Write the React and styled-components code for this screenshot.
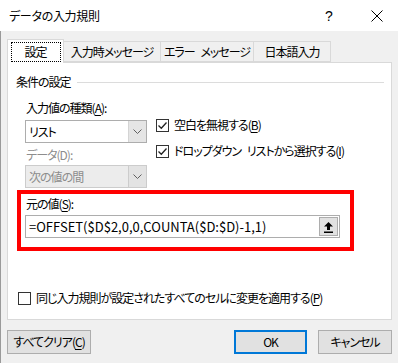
import React from 'react'
import styled, { createGlobalStyle } from 'styled-components'

const Global = createGlobalStyle`
  html, body {
    margin: 0;
    padding: 0;
    background: #f0f0f0;
  }
  body {
    font-family: "Noto Sans CJK JP", "Noto Sans", sans-serif;
    font-size: 12px;
    font-feature-settings: "palt";
    letter-spacing: -1px;
    color: #000;
  }
`

const Window = styled.div`
  width: 398px;
  height: 363px;
  display: flex;
  flex-direction: column;
  overflow: hidden;
`

const TitleBar = styled.div`
  height: 31px;
  flex: none;
  background: #fff;
  display: flex;
  align-items: center;
  padding-left: 9px;
`

const Title = styled.div`
  flex: 1;
  font-size: 12px;
  line-height: 16px;
  letter-spacing: -0.3px;
`

const Help = styled.div`
  width: 14px;
  font-size: 14px;
  font-family: "Liberation Sans", sans-serif;
  letter-spacing: 0;
  margin-right: 35px;
  text-align: center;
`

const Close = styled.div`
  width: 12px;
  height: 12px;
  margin-right: 15px;
  display: flex;
`

const Body = styled.div`
  flex: 1;
  border-left: 1px solid #9a9a9a;
  padding: 8px 6px 0 6px;
  display: flex;
  flex-direction: column;
`

const TabRow = styled.div`
  display: flex;
  align-items: flex-end;
  height: 23px;
  position: relative;
  z-index: 1;
`

const Tab = styled.div`
  width: ${p => p.w}px;
  height: ${p => (p.active ? '24px' : '21px')};
  margin-bottom: ${p => (p.active ? '-1px' : '0')};
  box-sizing: border-box;
  border: 1px solid #d9d9d9;
  border-bottom: ${p => (p.active ? 'none' : '1px solid #d9d9d9')};
  margin-left: ${p => (p.active ? '0' : '-1px')};
  background: ${p => (p.active ? '#fff' : '#f0f0f0')};
  display: flex;
  align-items: center;
  justify-content: center;
  white-space: pre;
`

const Focus = styled.span`
  outline: 1px dotted #000;
  width: 48px;
  text-align: center;
  line-height: 18px;
  margin-top: 1px;
`

const Panel = styled.div`
  height: 258px;
  box-sizing: border-box;
  background: #fff;
  border: 1px solid #d9d9d9;
  padding: 11px 7px 0 8px;
  display: flex;
  flex-direction: column;
`

const GroupHead = styled.div`
  display: flex;
  align-items: center;
  gap: 6px;
  line-height: 16px;
`

const Rule = styled.div`
  flex: 1;
  height: 1px;
  background: #dcdcdc;
`

const Columns = styled.div`
  display: flex;
  margin-top: 4px;
  padding-left: 9px;
`

const LeftCol = styled.div`
  width: 122px;
  display: flex;
  flex-direction: column;
`

const RightCol = styled.div`
  display: flex;
  flex-direction: column;
  gap: 10px;
  margin-left: 9px;
  padding-top: 23px;
`

const Label = styled.div`
  line-height: 16px;
  color: ${p => (p.disabled ? '#8d8d8d' : '#000')};
  margin-top: ${p => p.top || 0}px;
  padding-left: 1px;
`

const Key = styled.span`
  text-decoration: underline;
  text-underline-offset: 2px;
`

const Gap = styled.span`
  display: inline-block;
  width: 4px;
`

const Combo = styled.div`
  height: 23px;
  margin-top: ${p => p.top}px;
  box-sizing: border-box;
  border: 1px solid ${p => (p.disabled ? '#cccccc' : '#adadad')};
  background: ${p => (p.disabled ? '#ececec' : '#fff')};
  color: ${p => (p.disabled ? '#8d8d8d' : '#000')};
  display: flex;
`

const ComboText = styled.div`
  flex: 1;
  padding-left: 3px;
  line-height: 21px;
`

const ComboArrow = styled.div`
  width: 17px;
  background: ${p => (p.disabled ? '#e3e3e3' : '#e5e5e5')};
  border-left: 1px solid ${p => (p.disabled ? '#cccccc' : '#d4d4d4')};
  display: flex;
  align-items: center;
  justify-content: center;
`

const Check = styled.div`
  display: flex;
  align-items: center;
  gap: 5px;
  line-height: 16px;
  white-space: nowrap;
`

const Box = styled.div`
  width: 13px;
  height: 13px;
  box-sizing: border-box;
  border: 1px solid #333;
  background: #fff;
  display: flex;
  align-items: center;
  justify-content: center;
  flex: none;
`

const Source = styled.div`
  margin: 2px 0 0 1px;
  width: 337px;
  height: 61px;
  box-sizing: border-box;
  border: 4px solid #ff0000;
  padding: 2px 0 0 4px;
`

const SourceLabel = styled.div`
  line-height: 16px;
  padding-left: 1px;
`

const Input = styled.div`
  margin-top: 3px;
  width: 315px;
  height: 23px;
  box-sizing: border-box;
  border: 1px solid #adadad;
  background: #fff;
  display: flex;
  align-items: center;
  padding: 0 1px 0 3px;
`

const Formula = styled.div`
  flex: 1;
  font-size: 13px;
  line-height: 21px;
  letter-spacing: 0;
  font-feature-settings: normal;
`

const RefButton = styled.div`
  width: 19px;
  height: 19px;
  box-sizing: border-box;
  border: 1px solid #adadad;
  background: #e1e1e1;
  display: flex;
  align-items: center;
  justify-content: center;
`

const Apply = styled.div`
  margin-top: auto;
  margin-bottom: 13px;
  padding-left: 2px;
`

const Footer = styled.div`
  display: flex;
  margin-top: 10px;
  gap: 11px;
`

const Button = styled.div`
  width: ${p => p.w}px;
  height: 24px;
  box-sizing: border-box;
  border: ${p => (p.primary ? '2px solid #0078d7' : '1px solid #adadad')};
  background: #e1e1e1;
  display: flex;
  align-items: center;
  justify-content: center;
  line-height: 16px;
  margin-left: ${p => (p.push ? 'auto' : '0')};
`

const Chevron = () => (
  <svg width="9" height="5" viewBox="0 0 9 5">
    <path d="M0.5 0.5 L4.5 4.5 L8.5 0.5" fill="none" stroke="#606060" strokeWidth="1" />
  </svg>
)

const Tick = () => (
  <svg width="11" height="11" viewBox="0 0 11 11">
    <path d="M1.5 5.5 L4.3 8.3 L9.5 2.5" fill="none" stroke="#222" strokeWidth="1.3" />
  </svg>
)

export default function App() {
  return (
    <Window>
      <Global />
      <TitleBar>
        <Title>データの入力規則</Title>
        <Help>?</Help>
        <Close>
          <svg width="12" height="12" viewBox="0 0 12 12">
            <path d="M0.5 0.5 L11.5 11.5 M11.5 0.5 L0.5 11.5" stroke="#000" strokeWidth="1" />
          </svg>
        </Close>
      </TitleBar>
      <Body>
        <TabRow>
          <Tab active w={57}>
            <Focus>設定</Focus>
          </Tab>
          <Tab w={98}>入力時メッセージ</Tab>
          <Tab w={94}>
            エラー<Gap /> メッセージ
          </Tab>
          <Tab w={78}>日本語入力</Tab>
        </TabRow>
        <Panel>
          <GroupHead>
            <span>条件の設定</span>
            <Rule />
          </GroupHead>
          <Columns>
            <LeftCol>
              <Label top={6}>
                入力値の種類(<Key>A</Key>):
              </Label>
              <Combo top={4}>
                <ComboText>リスト</ComboText>
                <ComboArrow>
                  <Chevron />
                </ComboArrow>
              </Combo>
              <Label disabled top={4}>
                データ(D):
              </Label>
              <Combo disabled top={2}>
                <ComboText>次の値の間</ComboText>
                <ComboArrow disabled>
                  <Chevron />
                </ComboArrow>
              </Combo>
            </LeftCol>
            <RightCol>
              <Check>
                <Box>
                  <Tick />
                </Box>
                <span>
                  空白を無視する(<Key>B</Key>)
                </span>
              </Check>
              <Check>
                <Box>
                  <Tick />
                </Box>
                <span>
                  ドロップダウン<Gap /> リストから選択する(<Key>I</Key>)
                </span>
              </Check>
            </RightCol>
          </Columns>
          <Source>
            <SourceLabel>
              元の値(<Key>S</Key>):
            </SourceLabel>
            <Input>
              <Formula>=OFFSET($D$2,0,0,COUNTA($D:$D)-1,1)</Formula>
              <RefButton>
                <svg width="11" height="12" viewBox="0 0 11 12">
                  <path d="M5.5 1 L10 5.5 L7 5.5 L7 9 L4 9 L4 5.5 L1 5.5 Z" fill="#000" />
                  <rect x="1" y="10.5" width="9" height="1.5" fill="#000" />
                </svg>
              </RefButton>
            </Input>
          </Source>
          <Apply>
            <Check>
              <Box />
              <span>
                同じ入力規則が設定されたすべてのセルに変更を適用する(<Key>P</Key>)
              </span>
            </Check>
          </Apply>
        </Panel>
        <Footer>
          <Button w={84}>
            すべてクリア(<Key>C</Key>)
          </Button>
          <Button w={73} primary push>
            OK
          </Button>
          <Button w={74}>キャンセル</Button>
        </Footer>
      </Body>
    </Window>
  )
}
